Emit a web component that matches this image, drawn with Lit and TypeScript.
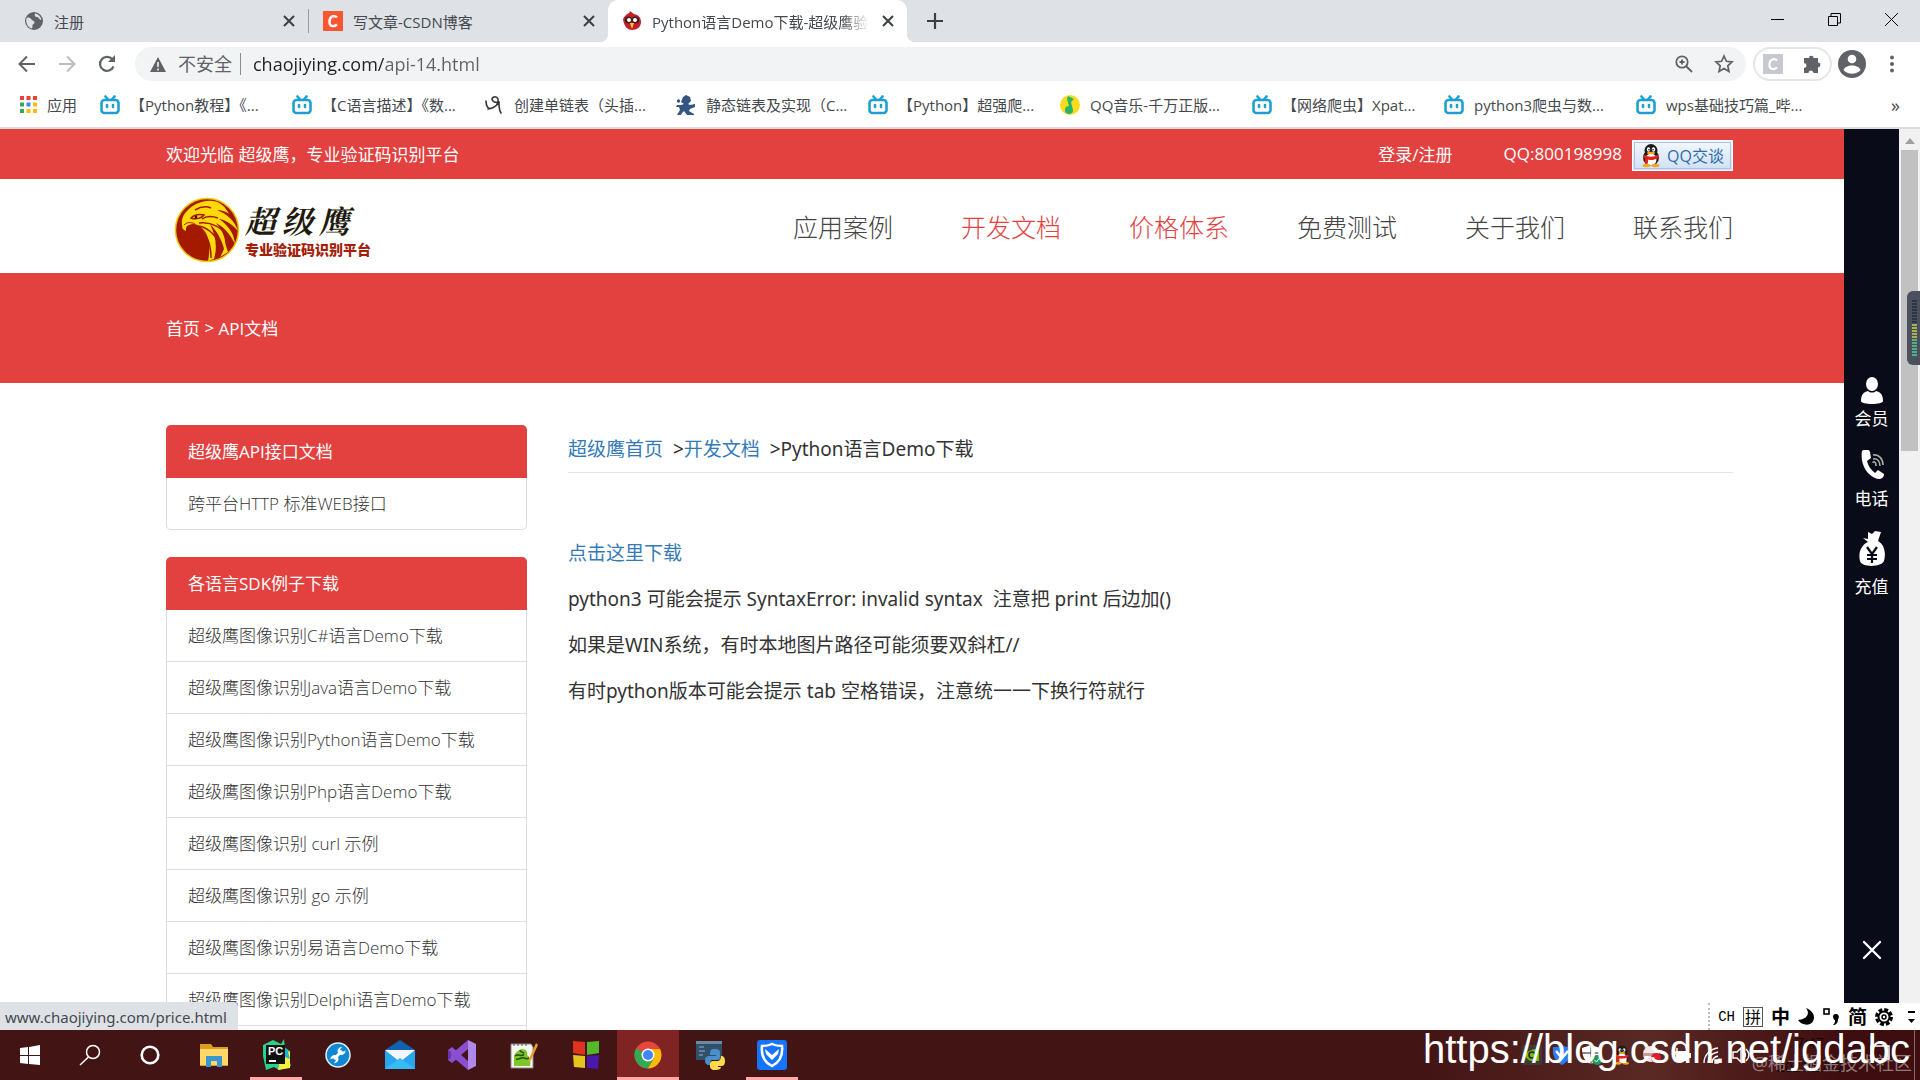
import { LitElement, html, css, svg } from "lit";
import { customElement } from "lit/decorators.js";

const globe = html`<svg class="i20" viewBox="0 0 20 20"><circle cx="10" cy="10" r="9" fill="#5f6368"/><path d="M2.500 7c2-1 4 0 5 1.500s3 1 3 3-2 1-2 3 0 2-1 3C3.500 16 1.500 12 2.500 7zM11 2.500c-1 2 0 3.500 2 3.500s2 3 4.500 3c-.5-3-3-6-6.500-6.500z" fill="#dee1e6"/></svg>`;
const csdn = html`<svg class="i20" viewBox="0 0 20 20"><rect width="20" height="20" fill="#fc5531"/><path d="M14 6.500C12.500 4.500 7 4 6.500 10s4.500 6 7.500 3.500" fill="none" stroke="#fff" stroke-width="2.400"/></svg>`;
const bird = html`<svg class="i20" viewBox="0 0 20 20"><path d="M1 8C4 2 8 3 8 0l4 3c5 1 7 4 7 8 0 5-4 8-9 8s-8-4-9-11z" fill="#c5202a"/><circle cx="6.500" cy="9" r="3.600" fill="#3a2320"/><circle cx="13.500" cy="9" r="3.600" fill="#3a2320"/><circle cx="7" cy="9" r="2" fill="#fff"/><circle cx="13" cy="9" r="2" fill="#fff"/><path d="M8 12h4l-2 6z" fill="#f6c544"/></svg>`;
const bili = html`<svg class="i20" viewBox="0 0 20 20" fill="none" stroke="#1d9fd0" stroke-width="2.600" stroke-linecap="round" stroke-linejoin="round"><rect x="1.500" y="5" width="17" height="13" rx="3"/><path d="M5.500 1.500L8 4.500M14.500 1.500L12 4.500M7 10v2M13 10v2"/></svg>`;
const scribble = html`<svg class="i20" viewBox="0 0 20 20" fill="none" stroke="#333" stroke-width="1.600" stroke-linecap="round"><path d="M2 6c0 5 2 9 6 7 4-1 7-5 6-9-1-3-5-3-6 0 0 3 4 4 7 3M4 14c4 0 8-3 11-6 0 4 0 7 2 10"/></svg>`;
const knight = html`<svg class="i20" viewBox="0 0 20 20" fill="#34557f"><path d="M7 2l3-2 4 2 1 4-3 3 2 1 5-1v3l-5 2-1 2 5 3v1h-7l-3-4-2 2-1 2H1l3-5-1-3-3 0 1-2 4 0 3-1-3-2z"/><circle cx="2.500" cy="6" r="1.700"/></svg>`;
const qqmusic = html`<svg class="i20" viewBox="0 0 20 20"><circle cx="10" cy="10" r="10" fill="#fbdc1c"/><path d="M8 1l6 3-3 3 2 8a4 4 0 1 1-4-4L7 4z" fill="#26b36b"/></svg>`;

const penguin = svg`<ellipse cx="12" cy="14" rx="8" ry="8" fill="#1b1b1b"/><circle cx="12" cy="7" r="6.500" fill="#1b1b1b"/><ellipse cx="12" cy="16" rx="5.500" ry="6" fill="#fff"/><ellipse cx="9.500" cy="6" rx="1.700" ry="2.200" fill="#fff"/><ellipse cx="14.500" cy="6" rx="1.700" ry="2.200" fill="#fff"/><circle cx="10" cy="6.300" r=".8"/><circle cx="14" cy="6.300" r=".8"/><ellipse cx="12" cy="9.500" rx="4" ry="1.200" fill="#f7a51c"/><path d="M5 11c4 3 10 3 14 0l1 3c-5 3-9 3-11 2v4H6v-5l-2-1z" fill="#e2231a"/><ellipse cx="7.500" cy="22" rx="4" ry="1.700" fill="#f7a51c"/><ellipse cx="16.500" cy="22" rx="4" ry="1.700" fill="#f7a51c"/>`;

const eagle = html`<svg class="eagle" viewBox="0 0 66 66" role="img" aria-label="超级鹰">
  <circle cx="33" cy="33" r="31.500" fill="#a31a00" stroke="#f0c800" stroke-width="1.500"/>
  <path d="M9 31C6 24 9 17 15 12 24 4 38 1 47 7c4 3 6 6 8 10-4-3-8-4-12-4 10 4 18 11 21 21-6-7-12-11-19-12 9 6 15 14 16 25-5-10-11-17-19-21 7 8 11 17 9 29-3-12-8-21-15-28 5 10 8 22 4 35l-6 2c3-15 1-26-6-33-4-4-9-5-13-3-3 1-3 3-3 6-2-1-4-2-4-5z" fill="#ffd90a"/>
  <path d="M46 60c4-6 5-11 4-17l4 12z" fill="#ffd90a"/>
  <path d="M17 21c3-3 8-4 13-3-2 3-8 5-13 3zM21 13c5-3 11-4 16-2M28 22c4-3 10-3 16-1M25 26c12-2 24 5 31 16M25 29c10 2 19 11 24 24M24 31c8 5 13 15 13 30" fill="none" stroke="#a31a00" stroke-width="1.500"/>
  <path d="M10 28c3-3 7-3 11-1" fill="none" stroke="#a31a00"/><circle cx="22" cy="20" r="1.400" fill="#3a1000"/>
</svg>`;

const tabs = [
  { icon: globe, title: "注册", active: false },
  { icon: csdn, title: "写文章-CSDN博客", active: false },
  { icon: bird, title: "Python语言Demo下载-超级鹰验", active: true },
];

const bookmarks = [
  { icon: bili, text: "【Python教程】《..." },
  { icon: bili, text: "【C语言描述】《数..." },
  { icon: scribble, text: "创建单链表（头插..." },
  { icon: knight, text: "静态链表及实现（C..." },
  { icon: bili, text: "【Python】超强爬..." },
  { icon: qqmusic, text: "QQ音乐-千万正版..." },
  { icon: bili, text: "【网络爬虫】Xpat..." },
  { icon: bili, text: "python3爬虫与数..." },
  { icon: bili, text: "wps基础技巧篇_哔..." },
];

const nav = [
  { text: "应用案例", hot: false },
  { text: "开发文档", hot: true },
  { text: "价格体系", hot: true },
  { text: "免费测试", hot: false },
  { text: "关于我们", hot: false },
  { text: "联系我们", hot: false },
];

const panels = [
  { title: "超级鹰API接口文档", long: false, items: ["跨平台HTTP 标准WEB接口"] },
  {
    title: "各语言SDK例子下载",
    long: true,
    items: [
      "超级鹰图像识别C#语言Demo下载",
      "超级鹰图像识别Java语言Demo下载",
      "超级鹰图像识别Python语言Demo下载",
      "超级鹰图像识别Php语言Demo下载",
      "超级鹰图像识别 curl 示例",
      "超级鹰图像识别 go 示例",
      "超级鹰图像识别易语言Demo下载",
      "超级鹰图像识别Delphi语言Demo下载",
    ],
  },
];

const side = [
  { text: "会员", icon: html`<svg width="24" height="32" viewBox="0 0 24 32" fill="#fff"><ellipse cx="12" cy="8" rx="6" ry="7"/><path d="M1 25c0-7 3-9 7-10 2 2 6 2 8 0 4 1 7 3 7 10 0 4-22 4-22 0z"/></svg>` },
  { text: "电话", icon: html`<svg width="24" height="38" viewBox="0 0 24 38"><path d="M2 1c3-3 7-2 8 1l1 6-4 3c1 5 4 9 8 12l3-3 6 4c0 5-5 6-9 4C6 24 0 13 2 1z" fill="#fff"/><path d="M13 13c0-2 3-2 3 3M13 9c4-1 7 2 7 7M13 5c6-1 10 4 10 10" fill="none" stroke="#aaa" stroke-width="1.600"/></svg>` },
  { text: "充值", icon: html`<svg width="26" height="46" viewBox="0 0 26 46"><path d="M9 2l4 2 3-3 6 1-3 9c7 4 8 13 6 20-2 6-22 7-24 0-2-8 1-16 8-19l-5-4 5 1z" fill="#fff"/><path d="M8 17l5 7 5-7M13 24v9M8 25h10M8 29h10" fill="none" stroke="#0a0b18" stroke-width="2.200"/></svg>` },
];

const task = [
  { name: "开始", small: true, state: "", icon: html`<svg width="22" height="22" viewBox="0 0 22 22" fill="#fff"><path d="M1 4l8-1v8H1zM10 3l11-2v10H10zM1 12h8v8l-8-1zM10 12h11v9l-11-1z"/></svg>` },
  { name: "搜索", small: true, state: "", icon: html`<svg width="22" height="22" viewBox="0 0 22 22" fill="none" stroke="#fff" stroke-width="1.500"><circle cx="14" cy="8" r="6.500"/><path d="M9.500 13L1 21"/></svg>` },
  { name: "Cortana", small: true, state: "", icon: html`<svg width="22" height="22" viewBox="0 0 22 22" fill="none" stroke="#fff" stroke-width="2.600"><circle cx="11" cy="11" r="8.300"/></svg>` },
  { name: "文件资源管理器", small: false, state: "", icon: html`<svg width="30" height="30" viewBox="0 0 30 30"><path d="M1 4h11l2 3h15v19H1z" fill="#dc9c1d"/><path d="M1 9h28v16H1z" fill="#ffd869"/><path d="M7 16h16v11h-5v-6h-6v6H7z" fill="#3a96cf"/></svg>` },
  { name: "PyCharm", small: false, state: "open", icon: html`<svg width="30" height="32" viewBox="0 0 30 32"><path d="M2 6L12 1l8 4 3-5 1 9 5 3-1 9 2 6-12 4-5-3-8 3-3-14z" fill="#27d28a"/><path d="M19 20l10-8v17l-12 2z" fill="#f4ed43"/><path d="M21 6l5 4 3 10-5-2z" fill="#19b6d5"/><rect x="5" y="6" width="19" height="19" fill="#111"/><text class="pc" x="7" y="16">PC</text><path d="M8 21h7v2H8z" fill="#fff"/></svg>` },
  { name: "修复工具", small: false, state: "", icon: html`<svg width="26" height="26" viewBox="0 0 26 26"><circle cx="13" cy="13" r="12" fill="#1287d3" stroke="#e6f2fa" stroke-width="1.500"/><path d="M9 17l8-8" stroke="#fff" stroke-width="3"/><path d="M20.500 8.500a4 4 0 1 1-3.500-3.500l-2 2.500 2.500 2.500zM5.500 17.500a4 4 0 1 1 3.500 3.500l2-2.500-2.500-2.500z" fill="#fff"/></svg>` },
  { name: "邮件", small: false, state: "", icon: html`<svg width="32" height="30" viewBox="0 0 32 30"><path d="M1 10L16 0l15 10v4H1z" fill="#1161ac"/><path d="M1 11h30v18H1z" fill="#2aa6ee"/><path d="M1 10h30L16 22z" fill="#f2f7fb"/><path d="M1 29l15-11 15 11z" fill="#39baf5"/></svg>` },
  { name: "Visual Studio", small: false, state: "", icon: html`<svg width="30" height="30" viewBox="0 0 30 30"><path d="M21 0l8 4v22l-8 4z" fill="#b287ec"/><path d="M21 0v9L5 23l-4-3v-3zM1 10l4-3 16 14v9L1 13z" fill="#8a4fd0"/><path d="M1 10l3 2v6l-3 2z" fill="#6a35a8"/></svg>` },
  { name: "Notepad++", small: false, state: "", icon: html`<svg width="28" height="28" viewBox="0 0 28 28"><path d="M1 3h20l2 3v21H1z" fill="#f6f6f0" stroke="#888"/><path d="M4 2v3M8 2v3M12 2v3M16 2v3" stroke="#555"/><path d="M4 17c0-5 4-8 8-9 4 0 6 3 5 6 3 2 4 6 3 11H4z" fill="#7cc628"/><path d="M5 15c4-3 6 2 9-2M6 18c3 1 5-2 8-1s3 1 5 0M10 9c0 2 2 2 4 3" stroke="#234c12" stroke-width="1.500" fill="none"/><path d="M26 2l-7 16-2 4 4-3 7-15z" fill="#e8a02a"/></svg>` },
  { name: "四色工具", small: false, state: "", icon: html`<svg width="28" height="30" viewBox="0 0 28 30"><path d="M1 1l12 1v13L1 13z" fill="#e0321f"/><path d="M15 2l12-1v12l-12 2z" fill="#54b82a"/><path d="M1 15l12 1v12L2 27z" fill="#e2c51d"/><path d="M15 16l12-1-1 14-11-1z" fill="#4a18ae"/></svg>` },
  { name: "Chrome", small: false, state: "active", icon: html`<svg width="28" height="28" viewBox="0 0 28 28"><circle cx="14" cy="14" r="13.500" fill="#e8453c"/><path d="M14 14L2.300 7.250A13.500 13.500 0 0 0 14 27.500l6-10z" fill="#34a853"/><path d="M14 8h12a13.500 13.500 0 0 1-12 19.500l6-10.500z" fill="#fbbc05"/><circle cx="14" cy="14" r="6.500" fill="#fff"/><circle cx="14" cy="14" r="5" fill="#4285f4"/></svg>` },
  { name: "Python", small: false, state: "", icon: html`<svg width="30" height="30" viewBox="0 0 30 30"><path d="M1 1h26v19H1z" fill="#33506a"/><path d="M1 1h26v3H1z" fill="#6a8aa5"/><path d="M4 7h5M4 11h6M4 15h4" stroke="#98b4c8"/><path d="M19 9c5 0 6 1 6 4v4c0 2-1 3-3 3h-4c-3 0-3 2-3 5-4 0-5-2-5-5s2-4 4-4h7v-1h-6v-2c0-2 1-4 4-4z" fill="#4a8fcb"/><path d="M20 30c-4 0-5-2-5-4v-2c0-2 1-3 3-3h4c3 0 4-2 4-5 3 0 4 2 4 5s-1 5-4 5h-3v1h3c0 2-2 3-6 3z" fill="#ffd94c"/></svg>` },
  { name: "电脑管家", small: false, state: "open", icon: html`<svg width="30" height="30" viewBox="0 0 30 30"><rect width="30" height="30" rx="3" fill="#1573fe"/><path d="M15 4c4 2 7 2 10 2 1 9-2 16-10 20C7 22 4 15 5 6c3 0 6 0 10-2z" fill="none" stroke="#fff" stroke-width="2.500"/><path d="M8 9l7 6 7-6-1 5-6 6-6-6z" fill="#fff"/></svg>` },
];

@customElement("app-root")
export class AppRoot extends LitElement {
  static styles = css`
    :host { display: block; font-family: "Open Sans", "Noto Sans CJK SC", sans-serif; color: #333; }
    * { box-sizing: border-box; }
    a { color: inherit; text-decoration: none; }
    button { border: 0; background: none; padding: 0; margin: 0; font: inherit; color: inherit; display: flex; align-items: center; justify-content: center; }
    ul { list-style: none; margin: 0; padding: 0; }
    svg { flex: none; display: block; }
    .screen { display: flex; flex-direction: column; height: 100vh; overflow: hidden; background: #fff; }
    .i20 { width: 20px; height: 20px; }

    .strip { display: flex; height: 42px; flex: none; padding-left: 10px; background: #dee1e6; }
    .tab { position: relative; display: flex; align-items: center; gap: 10px; flex: 0 1 299px; min-width: 0; padding: 0 10px 0 14px; font-size: 15px; color: #45494d; }
    .tab.line { border-right: 1px solid #9a9da1; margin: 9px 0; }
    .tab.on { background: #fff; border-radius: 10px 10px 0 0; }
    .tab.on::before, .tab.on::after { content: ""; position: absolute; bottom: 0; width: 8px; height: 8px; }
    .tab.on::before { left: -8px; background: radial-gradient(circle at 0 0, transparent 8px, #fff 8px); }
    .tab.on::after { right: -8px; background: radial-gradient(circle at 100% 0, transparent 8px, #fff 8px); }
    .title { flex: 1; min-width: 0; overflow: hidden; white-space: nowrap; }
    .tab.on .title { -webkit-mask-image: linear-gradient(90deg, #000 88%, transparent); mask-image: linear-gradient(90deg, #000 88%, transparent); }
    .close { width: 18px; height: 18px; }
    .plus { width: 56px; }
    .win { display: flex; margin-left: auto; }
    .win button { width: 57px; height: 38px; }

    .bar { display: flex; align-items: center; flex: none; height: 44px; padding: 0 8px 0 7px; }
    .tool { width: 40px; height: 34px; }
    .omni { display: flex; align-items: center; flex: 1; height: 34px; margin: 0 7px 0 8px; padding: 0 8px 0 15px; border-radius: 17px; background: #f1f3f4; font-size: 18px; color: #5f6368; gap: 12px; }
    .unsafe { padding-right: 8px; border-right: 1px solid #8a8d91; line-height: 22px; }
    .url { flex: 1; min-width: 0; border: 0; outline: 0; padding: 0; font: inherit; color: transparent; background: linear-gradient(90deg, #202124 132px, #5f6368 132px); -webkit-background-clip: text; background-clip: text; }
    .omni .tool { width: 28px; }
    .pill { display: flex; align-items: center; gap: 3px; height: 34px; border: 2px solid #e4e6e8; border-radius: 17px; }
    .pill .tool { width: 36px; }

    .marks { display: flex; align-items: center; flex: none; height: 43px; padding: 0 20px 4px; border-bottom: 2px solid #dcdcdc; font-size: 15px; color: #45494d; white-space: nowrap; }
    .apps { display: flex; align-items: center; gap: 10px; width: 80px; }
    .mark { display: flex; align-items: center; gap: 10px; flex: 0 1 192px; min-width: 0; overflow: hidden; }
    .more { margin-left: auto; font-size: 18px; }

    .view { position: relative; display: flex; flex: 1; min-height: 0; }
    .page { position: relative; flex: 1; min-width: 0; overflow: hidden; }
    .wrap { padding: 0 166px; }
    .red { background: #e2413f; color: #fff; font-size: 17px; }
    .wrap.top { display: flex; align-items: center; height: 50px; padding-bottom: 2px; }
    .top .login { margin-left: auto; margin-right: 51px; }
    .chat { display: flex; align-items: center; gap: 4px; width: 101px; height: 31px; margin: 4px 0 0 10px; padding: 0 6px; border: 1px solid #fff; outline: 1px solid #a9c4e2; outline-offset: -3px; background: linear-gradient(#f4f8fd, #cfe0f5); color: #2e6da8; white-space: nowrap; font-size: 16px; }
    .head { display: flex; align-items: center; justify-content: space-between; height: 94px; }
    .logo { display: flex; align-items: center; gap: 5px; margin: 7px 0 0 8px; }
    .eagle { width: 66px; height: 66px; }
    .brand { display: flex; gap: 6px; font-family: "Noto Serif CJK SC", "Noto Sans CJK SC", serif; font-size: 31px; line-height: 40px; font-weight: 700; font-style: italic; color: #1e1a0c; }
    .slogan { display: block; font-size: 14px; line-height: 20px; font-weight: 900; color: #a51e08; }
    .nav { display: flex; gap: 68px; font-size: 25px; font-weight: 300; color: #444; }
    .nav .hot { color: #e2413f; }
    .wrap.crumb { display: flex; align-items: center; height: 110px; padding-bottom: 2px; white-space: pre; }
    .cols { display: flex; align-items: flex-start; gap: 41px; padding-top: 42px; }
    .left { flex: 0 0 361px; }
    .panel { margin-bottom: 27px; }
    .ptitle { margin: 0; padding-left: 22px; line-height: 53px; font-size: 17px; font-weight: 400; color: #fff; background: #e2413f; border-radius: 5px 5px 0 0; }
    .plist { border: 1px solid #ddd; border-top: 0; border-radius: 0 0 5px 5px; }
    .plist a { display: block; padding-left: 21px; font-size: 17px; line-height: 51px; font-weight: 300; color: #333; white-space: nowrap; }
    .plist li + li { border-top: 1px solid #ddd; }
    .plist.long { padding-bottom: 52px; }
    .plist.long li:last-child { border-bottom: 1px solid #ddd; }
    .main { flex: 1; min-width: 0; font-family: "Noto Sans", "Noto Sans CJK SC", sans-serif; font-size: 19px; }
    .main h1 { margin: 0 0 57px; padding: 4px 0 3px; border-bottom: 1px solid #e5e5e5; font-size: 19px; font-weight: 400; line-height: 40px; white-space: pre; }
    .main p { margin: 0; line-height: 46px; white-space: pre-wrap; }
    .main a { color: #337ab7; }
    .rail { position: absolute; top: 0; right: 0; bottom: 0; display: flex; flex-direction: column; align-items: center; gap: 20px; width: 55px; padding: 247px 0 60px; background: #0a0b18; color: #fff; font-size: 17px; }
    .rail a { display: flex; flex-direction: column; align-items: center; line-height: 22px; }
    .rail button { margin-top: auto; width: 30px; height: 40px; }
    .scroll { display: flex; flex-direction: column; align-items: center; flex: none; width: 21px; background: #f1f1f1; }
    .scroll svg { margin: 9px 0 6px; }
    .thumb { width: 17px; height: 301px; background: #c1c1c1; }
    .meter { position: absolute; right: 0; top: 162px; width: 13px; height: 74px; padding: 9px 3px 8px 5px; border-radius: 6px 0 0 6px; background: #4c4f5c; }
    .meter svg { width: 5px; height: 57px; }
    .status { position: absolute; left: 0; bottom: 0; height: 28px; padding: 0 11px 0 5px; border-radius: 0 5px 0 0; background: #dee1e6; font-family: "Noto Sans", sans-serif; font-size: 15px; line-height: 30px; color: #45494d; }
    .ime { position: absolute; right: 0; bottom: 0; display: flex; align-items: center; gap: 8px; height: 27px; padding: 0 3px 0 8px; border-left: 2px dotted #bbb; background: #fff; color: #000; font-size: 19px; font-weight: 700; line-height: 24px; }
    .ime .ch { font-family: "Liberation Mono", monospace; font-size: 14px; font-weight: 400; }
    .ime .pin { width: 20px; height: 20px; border: 1px solid #555; font-size: 16px; line-height: 18px; font-weight: 400; text-align: center; }

    .taskbar { position: relative; display: flex; flex: none; height: 50px; background: linear-gradient(90deg, #421414 0, #421414 74%, #5a2924 86%, #3e0d0f 96%, #3e0d0f); }
    .app { width: 62px; height: 50px; border-bottom: 3px solid transparent; padding-top: 3px; }
    .app.small { width: 60px; }
    .app.small + .app:not(.small) { margin-left: 3px; }
    .app.active { background: #7f2323; border-color: #ffa9a9; }
    .app.open { width: 52px; margin: 0 5px; border-color: #ffa9a9; }
    .pc { font: 700 11px "Liberation Sans", sans-serif; fill: #fff; }
    .tray { display: flex; align-items: center; gap: 10px; margin-left: auto; padding-right: 5px; }
    .clock { width: 100px; text-align: center; font-size: 14px; line-height: 24px; color: #180507; }
    .edge { width: 1px; height: 50px; margin-left: 14px; background: #8a6a6b; }
    .mark1 { position: absolute; right: 10px; top: -4px; font: 40px/46px "Liberation Sans", sans-serif; color: #fff; white-space: nowrap; }
    .mark2 { position: absolute; right: 8px; top: 20px; font-size: 18px; line-height: 26px; color: rgba(255, 255, 255, 0.45); white-space: nowrap; }
  `;

  private tab(t: (typeof tabs)[number], i: number) {
    return html`<div class="tab ${t.active ? "on" : ""} ${i === 0 ? "line" : ""}">
      ${t.icon}<span class="title">${t.title}</span>
      <button class="close" aria-label="关闭标签页"><svg width="12" height="12" viewBox="0 0 12 12" stroke="#3c4043" stroke-width="2"><path d="M1 1l10 10M11 1L1 11"/></svg></button>
    </div>`;
  }

  private chrome() {
    return html`
      <div class="strip">
        ${tabs.map((t, i) => this.tab(t, i))}
        <button class="plus" aria-label="新标签页"><svg width="16" height="16" viewBox="0 0 16 16" stroke="#3c4043" stroke-width="2.200"><path d="M8 0v16M0 8h16"/></svg></button>
        <div class="win">
          <button aria-label="最小化"><svg width="13" height="13" viewBox="0 0 13 13" stroke="#000"><path d="M0 6.500h13"/></svg></button>
          <button aria-label="还原"><svg width="13" height="13" viewBox="0 0 13 13" fill="none" stroke="#000"><path d="M.5 3.500h9v9h-9zM3 3V.5h9.500V10H10"/></svg></button>
          <button aria-label="关闭"><svg width="13" height="13" viewBox="0 0 13 13" stroke="#000"><path d="M0 0l13 13M13 0L0 13"/></svg></button>
        </div>
      </div>
      <div class="bar">
        <button class="tool" aria-label="后退"><svg width="18" height="18" viewBox="0 0 18 18" fill="none" stroke="#5f6368" stroke-width="2"><path d="M17 9H2M9 1.500L1.500 9 9 16.500"/></svg></button>
        <button class="tool" aria-label="前进"><svg width="18" height="18" viewBox="0 0 18 18" fill="none" stroke="#bcbec1" stroke-width="2"><path d="M1 9h15M9 1.500L16.500 9 9 16.500"/></svg></button>
        <button class="tool" aria-label="重新加载"><svg width="18" height="18" viewBox="0 0 18 18" fill="none" stroke="#5f6368" stroke-width="2.200"><path d="M15.500 11.500A7 7 0 1 1 14.500 4.500"/><path d="M17 0v7h-7z" fill="#5f6368" stroke="none"/></svg></button>
        <div class="omni">
          <svg width="16" height="15" viewBox="0 0 16 15"><path d="M8 0l8 15H0z" fill="#5f6368"/><path d="M8 5v5M8 11.500v2" stroke="#f1f3f4" stroke-width="1.600"/></svg>
          <span class="unsafe">不安全</span>
          <input class="url" aria-label="地址" .value=${"chaojiying.com/api-14.html"} />
          <button class="tool" aria-label="缩放"><svg width="18" height="18" viewBox="0 0 18 18" fill="none" stroke="#5f6368" stroke-width="1.800"><circle cx="7" cy="7" r="5.700"/><path d="M11 11l6 6M7 4.500v5M4.500 7h5"/></svg></button>
          <button class="tool" aria-label="收藏"><svg width="20" height="20" viewBox="0 0 20 20" fill="none" stroke="#5f6368" stroke-width="1.700"><path d="M10 2l2.400 5.300 5.600.6-4.200 3.900 1.200 5.700-5-2.900-5 2.900 1.200-5.700L2 7.900l5.600-.6z"/></svg></button>
        </div>
        <div class="pill">
          <button class="tool" aria-label="扩展 C"><svg width="20" height="20" viewBox="0 0 20 20"><rect width="20" height="20" fill="#c8c9d0"/><path d="M14 6.500C12.500 4.500 7 4 6.500 10s4.500 6 7.500 3.500" fill="none" stroke="#fff" stroke-width="2.200"/></svg></button>
          <button class="tool" aria-label="扩展程序"><svg width="20" height="20" viewBox="0 0 20 20" fill="#5f6368"><path d="M7 4a2.300 2.300 0 0 1 4.600 0H16v4.500a2.300 2.300 0 0 1 0 4.800V19h-4.500a2.500 2.500 0 0 0-5 0H2v-5a2.500 2.500 0 0 0 0-5V4z"/></svg></button>
        </div>
        <button class="tool" aria-label="用户"><svg width="28" height="28" viewBox="0 0 28 28"><circle cx="14" cy="14" r="14" fill="#5f6368"/><circle cx="14" cy="9" r="4.300" fill="#fff"/><path d="M5.500 20c2-6 15-6 17 0-4 5-13 5-17 0z" fill="#fff"/></svg></button>
        <button class="tool" aria-label="菜单"><svg width="4" height="18" viewBox="0 0 4 18" fill="#5f6368"><circle cx="2" cy="2.500" r="2"/><circle cx="2" cy="9" r="2"/><circle cx="2" cy="15.500" r="2"/></svg></button>
      </div>
      <div class="marks">
        <a class="apps" href="#"><svg width="17" height="17" viewBox="0 0 17 17"><path d="M0 0h4v4H0zM6.500 0h4v4h-4zM13 0h4v4h-4z" fill="#ea4335"/><path d="M0 6.500h4v4H0z" fill="#34a853"/><path d="M6.500 6.500h4v4h-4z" fill="#4285f4"/><path d="M13 6.500h4v4h-4zM6.500 13h4v4h-4zM13 13h4v4h-4z" fill="#fbbc05"/><path d="M0 13h4v4H0z" fill="#34a853"/></svg>应用</a>
        ${bookmarks.map((b) => html`<a class="mark" href="#">${b.icon}<span>${b.text}</span></a>`)}
        <button class="more" aria-label="更多书签">»</button>
      </div>`;
  }

  private site() {
    return html`
      <div class="page">
        <div class="wrap red top">
          <span>欢迎光临 超级鹰，专业验证码识别平台</span>
          <a class="login" href="#">登录/注册</a>
          <span>QQ:800198998</span>
          <a class="chat" href="#"><svg width="24" height="25" viewBox="0 0 24 24">${penguin}</svg>QQ交谈</a>
        </div>
        <div class="wrap head">
          <a class="logo" href="#">${eagle}
            <span><span class="brand"><span>超</span><span>级</span><span>鹰</span></span><span class="slogan">专业验证码识别平台</span></span>
          </a>
          <nav class="nav">${nav.map((n) => html`<a class=${n.hot ? "hot" : ""} href="#">${n.text}</a>`)}</nav>
        </div>
        <div class="wrap red crumb"><a href="#">首页</a> &gt; <span>API文档</span></div>
        <div class="wrap cols">
          <aside class="left">
            ${panels.map((p) => html`<section class="panel"><h2 class="ptitle">${p.title}</h2>
              <ul class="plist ${p.long ? "long" : ""}">${p.items.map((t) => html`<li><a href="#">${t}</a></li>`)}</ul></section>`)}
          </aside>
          <main class="main">
            <h1><a href="#">超级鹰首页</a>&nbsp; &gt;<a href="#">开发文档</a>&nbsp; &gt;Python语言Demo下载</h1>
            <p><a href="#">点击这里下载</a></p>
            <p>python3 可能会提示 SyntaxError: invalid syntax  注意把 print 后边加()</p>
            <p>如果是WIN系统，有时本地图片路径可能须要双斜杠//</p>
            <p>有时python版本可能会提示 tab 空格错误，注意统一一下换行符就行</p>
          </main>
        </div>
        <div class="rail">
          ${side.map((s) => html`<a href="#">${s.icon}<span>${s.text}</span></a>`)}
          <button aria-label="关闭侧栏"><svg width="20" height="20" viewBox="0 0 20 20" stroke="#fff" stroke-width="2.400" stroke-linecap="round"><path d="M2 2l16 16M18 2L2 18"/></svg></button>
        </div>
      </div>
      <div class="scroll"><svg width="10" height="6" viewBox="0 0 10 6"><path d="M5 0l5 6H0z" fill="#a0a0a0"/></svg><div class="thumb"></div></div>`;
  }

  private overlays() {
    const bars = Array.from({ length: 19 }, (_, i) => i);
    return html`
      <div class="meter"><svg viewBox="0 0 5 57">${bars.map((i) => svg`<rect y=${i * 3} width="5" height="2" fill=${i < 8 ? "#2c3445" : i < 13 ? "#a9b050" : "#4fb088"}></rect>`)}</svg></div>
      <div class="status">www.chaojiying.com/price.html</div>
      <div class="ime">
        <span class="ch">CH</span><span class="pin">拼</span><span>中</span>
        <svg width="17" height="18" viewBox="0 0 17 18"><path d="M8 0c4 5 2 11-8 12 4 6 15 7 16-2 0-5-3-8-8-10z"/></svg>
        <svg width="17" height="18" viewBox="0 0 17 18"><rect x="1" y="1" width="5" height="5" fill="none" stroke="#000" stroke-width="1.600"/><path d="M10 8a3 3 0 1 1 5 3c0 4-2 6-5 6 2-2 2-3 2-5-1 0-2-2-2-4z"/></svg>
        <span>简</span>
        <svg width="18" height="18" viewBox="0 0 18 18" fill="none" stroke="#000"><circle cx="9" cy="9" r="7.500" stroke-width="3" stroke-dasharray="3.900 2"/><circle cx="9" cy="9" r="5.500" stroke-width="2"/><circle cx="9" cy="9" r="2" stroke-width="1.500"/></svg>
        <svg width="16" height="18" viewBox="0 0 16 18"><path d="M7 3h7v2H7zM7 11h7l-3.500 4z"/></svg>
      </div>`;
  }

  private taskbar() {
    return html`<div class="taskbar">
      ${task.map((t) => html`<button class="app ${t.small ? "small" : ""} ${t.state}" aria-label=${t.name}>${t.icon}</button>`)}
      <div class="tray">
        <svg width="20" height="20" viewBox="0 0 20 20"><rect width="20" height="20" rx="2" fill="#3b3b3b"/><path d="M3 10c3-5 8-6 14-6v12H9c-3-1-5-3-6-6z" fill="#76b900"/><circle cx="10" cy="10" r="3" fill="none" stroke="#222" stroke-width="1.500"/></svg>
        <svg width="20" height="20" viewBox="0 0 20 20"><path d="M10 0c3 2 6 2 9 2 1 9-2 14-9 18C3 16 0 11 1 2c3 0 6 0 9-2z" fill="#2b7bf3"/><path d="M4 6l6 7 6-7" fill="none" stroke="#fff" stroke-width="2.500"/></svg>
        <svg width="20" height="20" viewBox="0 0 20 20"><path d="M9 0l9 3c0 8-2 13-9 16C2 16 0 11 0 3z" fill="#fff"/><path d="M9 0v19M0 8h18" stroke="#3a1010"/><circle cx="15" cy="15" r="5" fill="#1b9a58"/><path d="M12.500 15l2 2 3-4" stroke="#fff" fill="none"/></svg>
        <svg width="20" height="20" viewBox="0 0 24 24">${penguin}</svg>
        <svg width="20" height="20" viewBox="0 0 20 20"><circle cx="9" cy="9" r="8" fill="#f4e9e9"/><path d="M1 8h16v3H1z" fill="#c99"/><circle cx="14" cy="13" r="5" fill="#dc1f2e"/></svg>
        <svg width="20" height="14" viewBox="0 0 20 14"><path d="M4 3h13v2h2v5h-2v3H4z" fill="#fff"/><path d="M1 0v4h4V0M3 4v3" stroke="#fff" fill="none" stroke-width="1.500"/></svg>
        <svg width="20" height="18" viewBox="0 0 20 18" fill="none" stroke="#fff" stroke-width="1.400"><path d="M2 17C2 9 8 3 16 2M6 17c0-6 4-10 10-11M10 17c0-4 2-6 6-7"/><path d="M13 17v-3h3v3z" fill="#fff"/></svg>
        <svg width="18" height="18" viewBox="0 0 18 18" fill="none" stroke="#fff" stroke-width="1.400"><path d="M1 6h4l4-4v14l-4-4H1zM12 6c2 2 2 4 0 6M14 3c4 4 4 8 0 12"/></svg>
        <div class="clock">7:47<br />2021/2/22</div>
        <svg width="20" height="20" viewBox="0 0 20 20" fill="none" stroke="#fff" stroke-width="1.400"><path d="M1 1h18v13h-6l-3 4-3-4H1z"/></svg>
        <span class="edge"></span>
      </div>
      <span class="mark2">@稀土掘金技术社区</span>
      <span class="mark1">https://blog.csdn.net/jgdabc</span>
    </div>`;
  }

  render() {
    return html`<div class="screen" lang="zh-CN">
      ${this.chrome()}
      <div class="view">${this.site()}${this.overlays()}</div>
      ${this.taskbar()}
    </div>`;
  }
}
